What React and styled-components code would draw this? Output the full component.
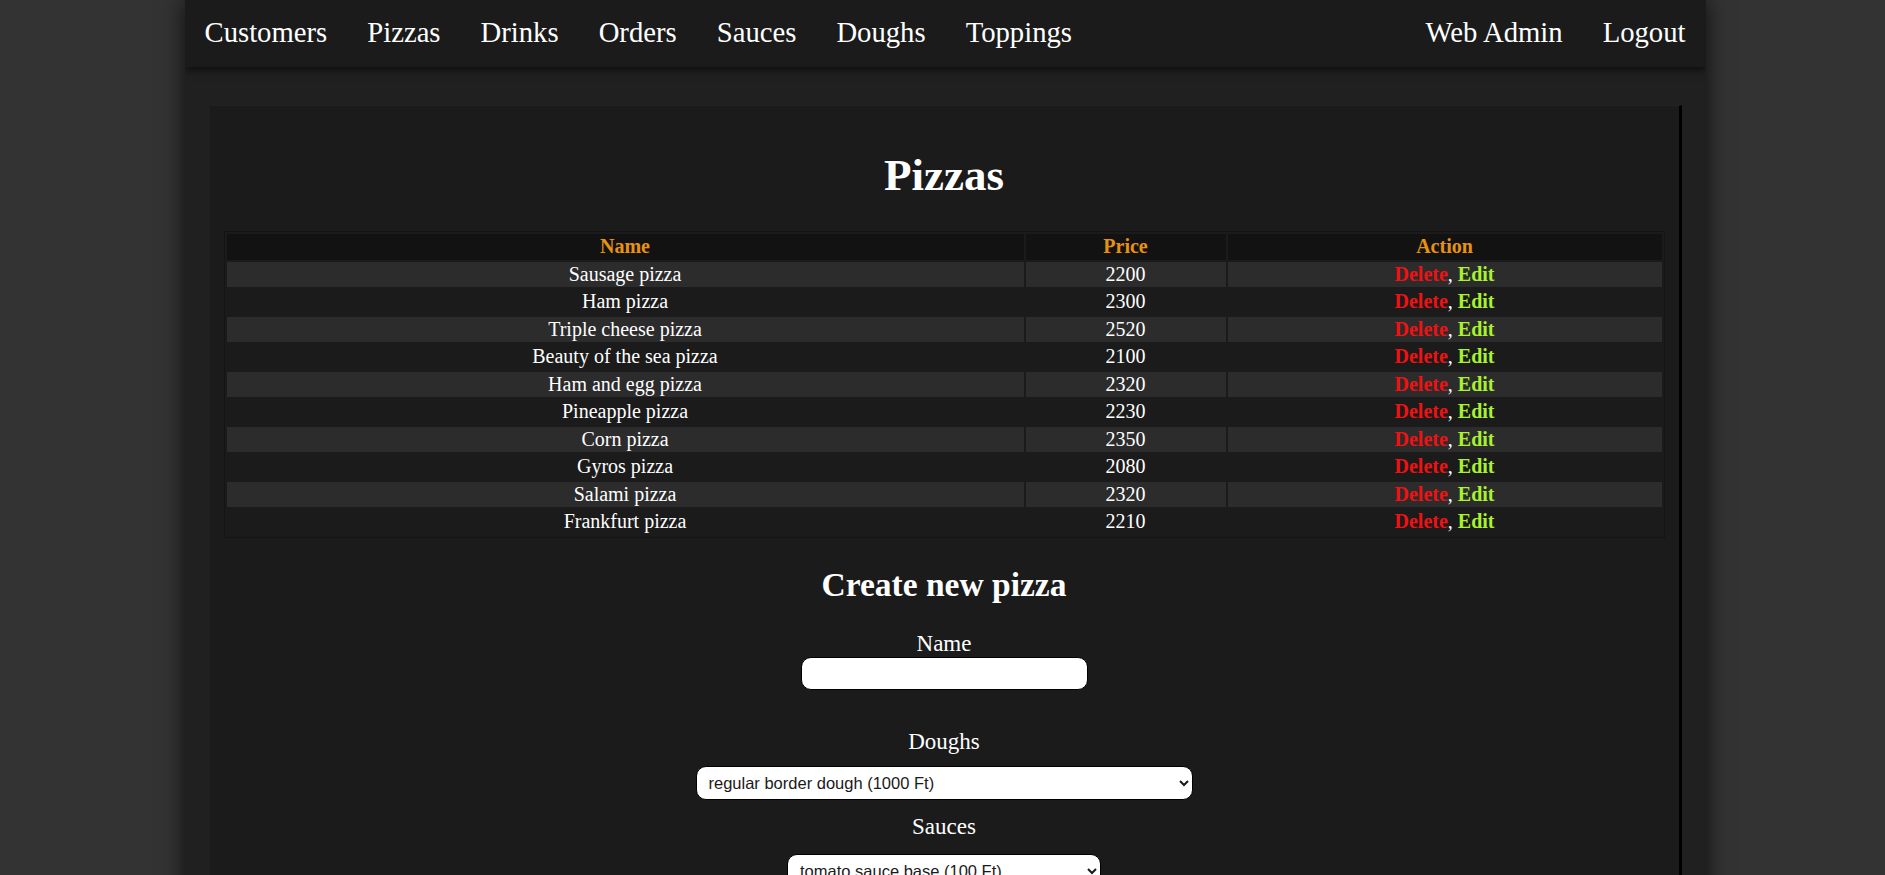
import React from 'react'
import styled, { createGlobalStyle } from 'styled-components'

const GlobalStyle = createGlobalStyle`
  body {
    margin: 0;
    background-color: #333333;
    font-family: "Liberation Serif", "Times New Roman", serif;
    color: white;
  }
`

const Page = styled.div`
  width: 1521px;
  margin-left: calc(50% - 758px);
  min-height: 100vh;
  background-color: #202020;
  box-shadow: 0 0 22px rgba(0, 0, 0, 0.75);
  overflow: hidden;
`

const Navbar = styled.nav`
  position: relative;
  z-index: 1;
  height: 67px;
  display: flex;
  align-items: center;
  justify-content: space-between;
  background-color: #1b1b1b;
  box-shadow: 0 3px 8px rgba(0, 0, 0, 0.6);
`

const NavGroup = styled.div`
  display: flex;
  align-items: center;
`

const NavLink = styled.a`
  padding: 0 20px;
  font-size: 28.7px;
  color: white;
  text-decoration: none;
  line-height: 32px;
  margin-top: -4px;
`

const Card = styled.div`
  margin: 38px 24px 0 25px;
  padding: 44px 14px 60px 14px;
  background-color: #1b1b1b;
  border-right: 3px solid #000;
  border-top: 1px solid #222;
  text-align: center;
`

const Title = styled.h1`
  margin: 0 0 31px 0;
  font-size: 45px;
  line-height: 50px;
  font-weight: bold;
`

const Table = styled.table`
  width: 100%;
  border-spacing: 2px;
  border: 1px solid #141414;
  font-size: 20px;
  background-color: #1b1b1b;
`

const HeadCell = styled.th`
  padding: 1px;
  line-height: 23.5px;
  background-color: #121212;
  color: #e8920f;
  font-weight: bold;
  width: ${props => props.w || 'auto'};
`

const Row = styled.tr`
  background-color: ${props => (props.odd ? '#2c2c2c' : 'transparent')};
`

const Cell = styled.td`
  padding: 1px;
  line-height: 23.5px;
  color: white;
  text-align: center;
`

const Action = styled.a`
  font-weight: bold;
  text-decoration: none;
  color: ${props => (props.kind === 'delete' ? '#f01212' : '#a8f22f')};
`

const SubTitle = styled.h2`
  margin: 28px 0 28px 0;
  font-size: 33.5px;
  line-height: 37px;
  font-weight: bold;
`

const Form = styled.form`
  display: flex;
  flex-direction: column;
  align-items: center;
`

const Label = styled.label`
  display: block;
  font-size: 23px;
  line-height: 25px;
  margin-top: ${props => props.top || '0px'};
  margin-bottom: ${props => props.bottom || '0px'};
`

const Input = styled.input`
  box-sizing: border-box;
  width: 287px;
  height: 33px;
  border: 1px solid #000;
  border-radius: 10px;
  background: white;
  font-family: "Liberation Sans", Arial, sans-serif;
  font-size: 16px;
  padding: 0 10px;
`

const Select = styled.select`
  box-sizing: border-box;
  width: ${props => props.w};
  height: 34px;
  border: 1px solid #000;
  border-radius: 10px;
  background: white;
  color: #1a1a1a;
  font-family: "Liberation Sans", Arial, sans-serif;
  font-size: 16.5px;
  padding: 0 8px;
`

const pizzas = [
  ['Sausage pizza', 2200],
  ['Ham pizza', 2300],
  ['Triple cheese pizza', 2520],
  ['Beauty of the sea pizza', 2100],
  ['Ham and egg pizza', 2320],
  ['Pineapple pizza', 2230],
  ['Corn pizza', 2350],
  ['Gyros pizza', 2080],
  ['Salami pizza', 2320],
  ['Frankfurt pizza', 2210],
]

const App = () => {
  return (
    <>
      <GlobalStyle />
      <Page>
        <Navbar>
          <NavGroup>
            <NavLink href="#">Customers</NavLink>
            <NavLink href="#">Pizzas</NavLink>
            <NavLink href="#">Drinks</NavLink>
            <NavLink href="#">Orders</NavLink>
            <NavLink href="#">Sauces</NavLink>
            <NavLink href="#">Doughs</NavLink>
            <NavLink href="#">Toppings</NavLink>
          </NavGroup>
          <NavGroup>
            <NavLink href="#">Web Admin</NavLink>
            <NavLink href="#">Logout</NavLink>
          </NavGroup>
        </Navbar>
        <Card>
          <Title>Pizzas</Title>
          <Table>
            <thead>
              <tr>
                <HeadCell w="795px">Name</HeadCell>
                <HeadCell w="198px">Price</HeadCell>
                <HeadCell>Action</HeadCell>
              </tr>
            </thead>
            <tbody>
              {pizzas.map(([name, price], i) => (
                <Row key={name} odd={i % 2 === 0}>
                  <Cell>{name}</Cell>
                  <Cell>{price}</Cell>
                  <Cell>
                    <Action kind="delete" href="#">Delete</Action>, <Action kind="edit" href="#">Edit</Action>
                  </Cell>
                </Row>
              ))}
            </tbody>
          </Table>
          <SubTitle>Create new pizza</SubTitle>
          <Form>
            <Label bottom="1px">Name</Label>
            <Input type="text" />
            <Label top="39px" bottom="12px">Doughs</Label>
            <Select w="497px" defaultValue="regular">
              <option value="regular">regular border dough (1000 Ft)</option>
              <option value="thin">thin dough (1000 Ft)</option>
            </Select>
            <Label top="14px" bottom="15px">Sauces</Label>
            <Select w="314px" defaultValue="tomato">
              <option value="tomato">tomato sauce base (100 Ft)</option>
              <option value="sour">sour cream base (100 Ft)</option>
            </Select>
          </Form>
        </Card>
      </Page>
    </>
  )
}

export default App
